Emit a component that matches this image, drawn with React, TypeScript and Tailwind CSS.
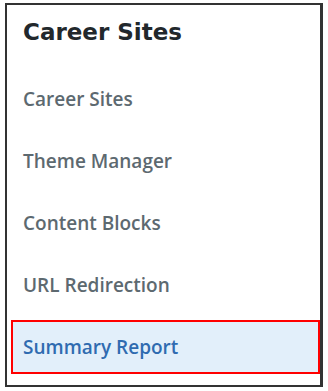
const items = [
  "Career Sites",
  "Theme Manager",
  "Content Blocks",
  "URL Redirection",
  "Summary Report",
];

export default function App() {
  const active = "Summary Report";

  return (
    <div className="h-[391px] w-[328px] bg-white pl-[5px] pt-[3px]">
      <div className="flex h-[384px] w-[318px] flex-col border-2 border-r-[3px] border-[#333333] bg-white">
        <h1
          className="pl-[16px] pt-[12px] text-[23px] font-bold leading-[30px] text-[#22282c]"
          style={{ fontFamily: "'DejaVu Sans', Inter, sans-serif" }}
        >
          Career Sites
        </h1>

        <ul
          className="mt-[25px] flex flex-col gap-[8px] pl-[4px]"
          style={{ fontFamily: "'Open Sans', 'Liberation Sans', sans-serif" }}
        >
          {items.map((item) =>
            item === active ? (
              <li
                key={item}
                className="flex h-[54px] items-center border-2 border-[#ff0000] bg-[#e2effa] pl-[10px] text-[19px] font-semibold text-[#2f6bb0]"
              >
                {item}
              </li>
            ) : (
              <li
                key={item}
                className="flex h-[54px] items-center border-2 border-transparent pl-[10px] text-[19px] font-semibold text-[#5d6970]"
              >
                {item}
              </li>
            )
          )}
        </ul>
      </div>
    </div>
  );
}
